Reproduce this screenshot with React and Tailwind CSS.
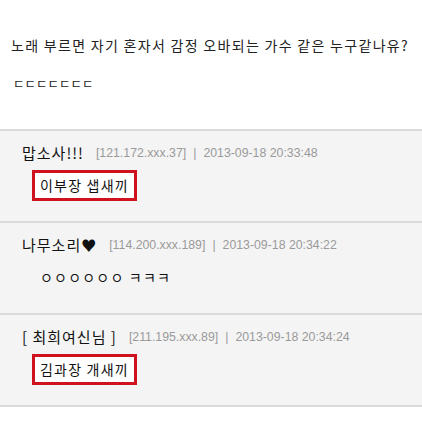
const KR = { fontFamily: '"Noto Sans CJK KR", "Noto Sans", sans-serif' };

const comments = [
  {
    nick: '맙소사!!!',
    ip: '[121.172.xxx.37]',
    date: '2013-09-18 20:33:48',
    body: '이부장 샙새끼',
    boxed: true,
  },
  {
    nick: '나무소리♥',
    ip: '[114.200.xxx.189]',
    date: '2013-09-18 20:34:22',
    body: 'ㅇㅇㅇㅇㅇㅇ ㅋㅋㅋ',
    boxed: false,
  },
  {
    nick: '[ 최희여신님 ]',
    ip: '[211.195.xxx.89]',
    date: '2013-09-18 20:34:24',
    body: '김과장 개새끼',
    boxed: true,
  },
];

function Comment({ c }) {
  return (
    <div className="border-t-2 border-[#dadada] bg-[#f4f4f4] pl-[22px] pt-[12px] pb-[20px]">
      <div className="flex h-5 items-center">
        <span className="text-[15px] tracking-[1px] text-[#111]" style={KR}>{c.nick}</span>
        <span className="ml-[12px] text-[12.3px] text-[#9a9a9a] font-['Liberation_Sans']">
          {c.ip}
          <span className="mx-[7px]">|</span>
          {c.date}
        </span>
      </div>
      <div className="mt-[7px] flex">
        <div
          className={`ml-[10px] flex h-[31px] items-center border-[3px] pl-[5px] pr-[5px] text-[14px] tracking-[1.2px] text-[#111] ${
            c.boxed ? 'border-[#d0121e] bg-white' : 'border-transparent'
          }`}
          style={KR}
        >
          {c.body}
        </div>
      </div>
    </div>
  );
}

export default function App() {
  return (
    <div className="h-[432px] w-[422px] overflow-hidden bg-white">
      <div className="pl-[11px] pt-[35px]">
        <p className="h-5 whitespace-nowrap text-[14px] leading-5 tracking-[1.3px] text-[#222]" style={KR}>
          노래 부르면 자기 혼자서 감정 오바되는 가수 같은 누구같나유?
        </p>
        <p className="mt-[19px] h-5 pl-[2px] text-[12.5px] leading-5 text-[#222]" style={KR}>
          ㄷㄷㄷㄷㄷㄷㄷ
        </p>
      </div>
      <div className="mt-[35px]">
        {comments.map((c, i) => (
          <Comment key={i} c={c} />
        ))}
        <div className="border-t-2 border-[#dadada]" />
      </div>
    </div>
  );
}
